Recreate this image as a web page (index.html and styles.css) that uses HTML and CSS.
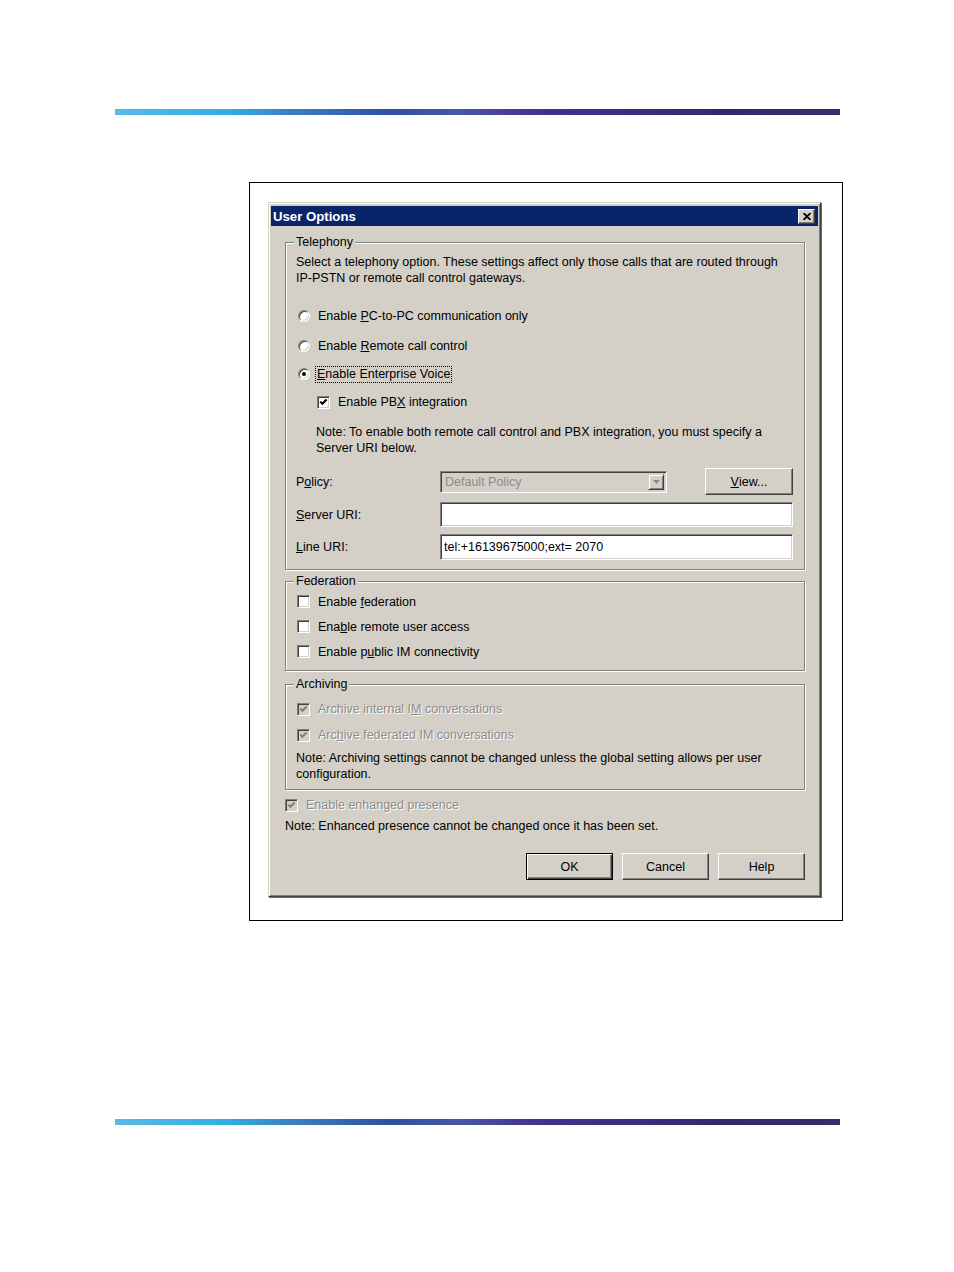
FILE: index.html
```html
<!DOCTYPE html>
<html>
<head>
<meta charset="utf-8">
<title>User Options</title>
<link rel="stylesheet" href="styles.css">
</head>
<body>
<div class="rule rule-top"></div>
<div class="figure">
  <div class="dialog">
    <div class="titlebar">
      <span class="title">User Options</span>
      <span class="close"><svg width="8" height="7" viewBox="0 0 8 7"><path d="M0.5 0 L7.5 7 M7.5 0 L0.5 7" stroke="#000" stroke-width="1.8" fill="none"/></svg></span>
    </div>
    <div class="body">
      <fieldset class="group tel">
        <legend>Telephony</legend>
        <p class="desc">Select a telephony option. These settings affect only those calls that are routed through<br>IP-PSTN or remote call control gateways.</p>
        <div class="opt radio-row r1"><span class="radio"></span><span class="lbl">Enable <u>P</u>C-to-PC communication only</span></div>
        <div class="opt radio-row r2"><span class="radio"></span><span class="lbl">Enable <u>R</u>emote call control</span></div>
        <div class="opt radio-row r3"><span class="radio"><span class="dot"></span></span><span class="lbl focus"><u>E</u>nable Enterprise Voice</span></div>
        <div class="opt cb-row sub"><span class="cb"><svg width="9" height="9" viewBox="0 0 9 9"><path d="M1.3 3.6 L3.4 5.8 L7.6 1.4" stroke="#000" stroke-width="2.1" fill="none"/></svg></span><span class="lbl">Enable PB<u>X</u> integration</span></div>
        <p class="note sub-note">Note: To enable both remote call control and PBX integration, you must specify a<br>Server URI below.</p>
        <div class="field f-policy">
          <span class="flabel">P<u>o</u>licy:</span>
          <span class="select"><span class="seltext">Default Policy</span><span class="selbtn"><svg width="7" height="4" viewBox="0 0 7 4"><path d="M0 0 H7 L3.5 4 Z" fill="#8a8a8a"/></svg></span></span>
          <span class="btn view"><u>V</u>iew...</span>
        </div>
        <div class="field f-server">
          <span class="flabel"><u>S</u>erver URI:</span>
          <span class="input"></span>
        </div>
        <div class="field f-line">
          <span class="flabel"><u>L</u>ine URI:</span>
          <span class="input tall">tel:+16139675000;ext= 2070</span>
        </div>
      </fieldset>

      <fieldset class="group fed">
        <legend>Federation</legend>
        <div class="opt cb-row r25"><span class="cb"></span><span class="lbl">Enable <u>f</u>ederation</span></div>
        <div class="opt cb-row r25"><span class="cb"></span><span class="lbl">Ena<u>b</u>le remote user access</span></div>
        <div class="opt cb-row r25"><span class="cb"></span><span class="lbl">Enable p<u>u</u>blic IM connectivity</span></div>
      </fieldset>

      <fieldset class="group arch">
        <legend>Archiving</legend>
        <div class="opt cb-row r26 first"><span class="cb dis-cb"><svg width="9" height="9" viewBox="0 0 9 9"><path d="M1.3 3.6 L3.4 5.8 L7.6 1.4" stroke="#808080" stroke-width="2.1" fill="none"/></svg></span><span class="lbl dis">Archive internal I<u>M</u> conversations</span></div>
        <div class="opt cb-row r26"><span class="cb dis-cb"><svg width="9" height="9" viewBox="0 0 9 9"><path d="M1.3 3.6 L3.4 5.8 L7.6 1.4" stroke="#808080" stroke-width="2.1" fill="none"/></svg></span><span class="lbl dis">Arc<u>h</u>ive federated IM conversations</span></div>
        <p class="note arch-note">Note: Archiving settings cannot be changed unless the global setting allows per user<br>configuration.</p>
      </fieldset>

      <div class="opt cb-row enh"><span class="cb dis-cb"><svg width="9" height="9" viewBox="0 0 9 9"><path d="M1.3 3.6 L3.4 5.8 L7.6 1.4" stroke="#808080" stroke-width="2.1" fill="none"/></svg></span><span class="lbl dis">Enable enhan<u>g</u>ed presence</span></div>
      <p class="note enh-note">Note: Enhanced presence cannot be changed once it has been set.</p>

      <div class="buttons">
        <span class="btn default">OK</span>
        <span class="btn">Cancel</span>
        <span class="btn">Help</span>
      </div>
    </div>
  </div>
</div>
<div class="rule rule-bottom"></div>
</body>
</html>
```

FILE: styles.css
```css
* { box-sizing: border-box; }

body {
  margin: 0;
  background: #fff;
  font-family: "Liberation Sans", Arial, sans-serif;
  font-size: 12.5px;
  color: #000;
}

.rule {
  margin-left: 115px;
  width: 725px;
  height: 6px;
  background: linear-gradient(to right,
    #5cb9e6 0px, #2fb0e4 110px, #3c80c3 175px, #2e50a0 275px,
    #4a56a6 345px, #45318e 420px, #36286f 600px, #3a2a68 725px);
}
.rule-top { margin-top: 109px; }
.rule-bottom { margin-top: 198px; }

.figure {
  margin: 67px 0 0 249px;
  width: 594px;
  height: 739px;
  border: 1px solid #000;
  padding: 19px 0 0 18px;
}

.dialog {
  width: 553px;
  height: 695px;
  background: #d4d0c8;
  border: 1px solid;
  border-color: #d4d0c8 #404040 #404040 #d4d0c8;
  box-shadow: inset 1px 1px 0 #fff, inset -1px -1px 0 #808080, 1px 1px 0 #6a6a6a;
  padding: 3px 2px;
  display: flex;
  flex-direction: column;
}

.titlebar {
  height: 20px;
  background: #0a246a;
  color: #fff;
  display: flex;
  align-items: center;
  justify-content: space-between;
  padding: 0 3px 0 2px;
  flex: none;
}
.title {
  font-weight: bold;
  font-size: 13.2px;
}
.close {
  width: 17px;
  height: 15px;
  background: #d4d0c8;
  border: 1px solid;
  border-color: #fff #404040 #404040 #fff;
  box-shadow: inset -1px -1px 0 #808080;
  display: flex;
  align-items: center;
  justify-content: center;
}

.body {
  padding: 0 13px 0 14px;
  display: flex;
  flex-direction: column;
}

.group {
  margin: 0;
  padding: 0 11px 0 10px;
  border: 1px solid #808080;
  box-shadow: 1px 1px 0 #fff, inset 1px 1px 0 #fff;
  min-width: 0;
}
.group legend {
  padding: 0 2px;
  margin-left: -2px;
  height: 16px;
  line-height: 16px;
  background: #d4d0c8;
}

.tel { margin-top: 8px; padding-bottom: 9px; }
.fed { margin-top: 3px; padding-bottom: 6px; }
.arch { margin-top: 5px; padding-bottom: 7px; }

p { margin: 0; }
.desc, .note { line-height: 16px; }
.desc { margin-top: 4px; }

.opt {
  display: flex;
  align-items: center;
  height: 20px;
}
.radio-row { padding-left: 2px; gap: 8px; }
.cb-row { padding-left: 1px; gap: 8px; }
.r1 { margin-top: 20px; }
.r2 { margin-top: 10px; }
.r3 { margin-top: 8px; }
.sub { margin-top: 8px; padding-left: 21px; }
.r25 { height: 25px; }
.r26 { height: 26px; }
.r26.first { margin-top: 4px; }

.tel .note { margin-top: 12px; }
.sub-note { padding-left: 20px; }
.arch-note { margin-top: 2px; }

.radio {
  width: 12px;
  height: 12px;
  border-radius: 50%;
  border: 1px solid;
  border-color: #808080 #fff #fff #808080;
  box-shadow: inset 1px 1px 0 #404040, inset -1px -1px 0 #d4d0c8;
  background: #fff;
  display: flex;
  align-items: center;
  justify-content: center;
  flex: none;
}
.dot {
  width: 4px;
  height: 4px;
  border-radius: 50%;
  background: #000;
}

.focus {
  border: 1px dotted #000;
  padding: 0 1px;
  margin-left: -3px;
  line-height: 15px;
}

.cb {
  width: 13px;
  height: 13px;
  border: 1px solid;
  border-color: #808080 #fff #fff #808080;
  box-shadow: inset 1px 1px 0 #404040, inset -1px -1px 0 #d4d0c8;
  background: #fff;
  display: flex;
  align-items: center;
  justify-content: center;
  flex: none;
}
.cb.dis-cb { background: #d4d0c8; }

.dis {
  color: #8c8c8c;
  text-shadow: 1px 1px 0 #fff;
}

.field {
  display: flex;
  align-items: center;
}
.flabel { width: 144px; flex: none; }
.f-policy { margin-top: 12px; height: 27px; }
.f-server { margin-top: 7px; height: 25px; }
.f-line { margin-top: 7px; height: 26px; }

.select {
  width: 227px;
  height: 22px;
  border: 1px solid;
  border-color: #808080 #fff #fff #808080;
  box-shadow: inset 1px 1px 0 #404040, inset -1px -1px 0 #d4d0c8;
  background: #d4d0c8;
  display: flex;
  align-items: center;
  padding: 2px;
}
.seltext {
  flex: 1;
  color: #8c8c8c;
  padding-left: 2px;
}
.selbtn {
  width: 16px;
  height: 16px;
  background: #d4d0c8;
  border: 1px solid;
  border-color: #d4d0c8 #404040 #404040 #d4d0c8;
  box-shadow: inset 1px 1px 0 #fff, inset -1px -1px 0 #808080;
  display: flex;
  align-items: center;
  justify-content: center;
}

.input {
  width: 353px;
  height: 25px;
  border: 1px solid;
  border-color: #808080 #fff #fff #808080;
  box-shadow: inset 1px 1px 0 #404040, inset -1px -1px 0 #d4d0c8;
  background: #fff;
  display: flex;
  align-items: center;
  padding-left: 3px;
}
.input.tall { height: 26px; }

.btn {
  height: 27px;
  background: #d4d0c8;
  border: 1px solid;
  border-color: #fff #404040 #404040 #fff;
  box-shadow: inset -1px -1px 0 #808080;
  display: flex;
  align-items: center;
  justify-content: center;
}
.view { width: 88px; margin-left: 38px; }

.enh { margin-top: 5px; padding-left: 0; }
.enh-note { margin-top: 3px; }

.buttons {
  margin-top: 19px;
  display: flex;
  justify-content: flex-end;
  gap: 9px;
}
.buttons .btn { width: 87px; }
.btn.default {
  border: 1px solid #000;
  box-shadow: inset 1px 1px 0 #fff, inset -1px -1px 0 #404040, inset -2px -2px 0 #808080;
}
```
